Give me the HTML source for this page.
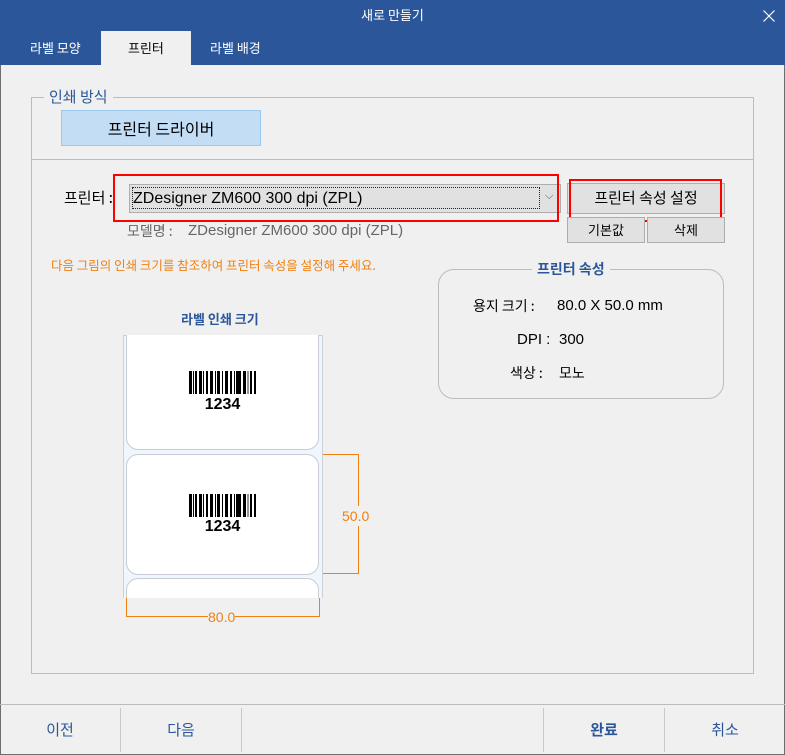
<!DOCTYPE html><html><head><meta charset="utf-8"><style>
*{box-sizing:border-box;margin:0;padding:0}
body{width:785px;height:755px;background:#f0f0f0;font-family:"Liberation Sans","Noto Sans CJK KR",sans-serif;position:relative;overflow:hidden;font-size:14px;color:#000}
.a{position:absolute}
.kr{font-family:"Noto Sans CJK KR","Liberation Sans",sans-serif}
.btn{position:absolute;background:#e1e1e1;border:1px solid #adadad;text-align:center}
.lab{position:absolute;left:126px;width:193px;background:#fff;border:1px solid #c8ccd4;border-radius:12px}
.bc{position:absolute;left:62px;top:36px}
.num{position:absolute;left:0;width:100%;text-align:center;font-weight:bold;font-size:16px;top:60px}
</style></head><body>
<div class="a" style="left:0;top:0;width:785px;height:755px;border:1px solid #6e6e6e"></div>
<div class="a" style="left:0;top:0;width:785px;height:65px;background:#2b579a"></div>
<div class="a kr" style="left:0;top:5px;width:785px;text-align:center;color:#fff;font-size:13px">새로 만들기</div>
<svg class="a" style="left:763px;top:10px" width="12" height="12" viewBox="0 0 12 12"><path d="M0.5 0.5L11.5 11.5M11.5 0.5L0.5 11.5" stroke="#fff" stroke-width="1.2"/></svg>
<div class="a kr" style="left:30px;top:38px;color:#fff;font-size:13px">라벨 모양</div>
<div class="a" style="left:101px;top:31px;width:90px;height:34px;background:#f0f0f0"></div>
<div class="a kr" style="left:128px;top:38px;font-size:13px">프린터</div>
<div class="a kr" style="left:210px;top:38px;color:#fff;font-size:13px">라벨 배경</div>

<div class="a" style="left:31px;top:97px;width:723px;height:577px;border:1px solid #bcbcbc"></div>
<div class="a" style="left:31px;top:159px;width:723px;height:1px;background:#bcbcbc"></div>
<div class="a kr" style="left:44px;top:86px;padding:0 5px;background:#f0f0f0;color:#2b579a;font-size:15px">인쇄 방식</div>
<div class="a kr" style="left:61px;top:110px;width:200px;height:36px;background:#c2ddf4;border:1px solid #99c9ef;text-align:center;line-height:34px;font-size:16px">프린터 드라이버</div>

<div class="a kr" style="left:64px;top:187px;font-size:15px">프린터 :</div>
<div class="a" style="left:129px;top:184px;width:432px;height:29px;background:#e1e1e1;border:1px solid #adadad"></div>
<div class="a" style="left:132px;top:187px;width:408px;height:22px;border:1px dotted #222"></div>
<div class="a" style="left:133px;top:190px;font-size:16px">ZDesigner ZM600 300 dpi (ZPL)</div>
<div class="a" style="left:545px;top:190px;font-size:11px;color:#555">⌵</div>
<div class="a" style="left:113px;top:174px;width:446px;height:48px;border:2px solid #f00"></div>
<div class="a kr" style="left:127px;top:221px;color:#666;font-size:14px">모델명 :</div>
<div class="a" style="left:188px;top:222px;color:#666;font-size:15px">ZDesigner ZM600 300 dpi (ZPL)</div>

<div class="btn kr" style="left:567px;top:183px;width:158px;height:31px;line-height:28px;font-size:15px">프린터 속성 설정</div>
<div class="a" style="left:569px;top:179px;width:153px;height:43px;border:2px solid #f00"></div>
<div class="btn kr" style="left:567px;top:217px;width:78px;height:26px;line-height:23px;font-size:13px">기본값</div>
<div class="btn kr" style="left:647px;top:217px;width:78px;height:26px;line-height:23px;font-size:13px">삭제</div>

<div class="a kr" style="left:51px;top:255px;color:#f08010;font-size:12.5px">다음 그림의 인쇄 크기를 참조하여 프린터 속성을 설정해 주세요.</div>

<div class="a" style="left:438px;top:269px;width:286px;height:130px;border:1px solid #bcbcbc;border-radius:16px"></div>
<div class="a kr" style="left:532px;top:259px;padding:0 5px;background:#f0f0f0;color:#2b579a;font-size:14px;font-weight:bold">프린터 속성</div>
<div class="a kr" style="left:473px;top:296px;font-size:14px">용지 크기 :</div>
<div class="a" style="left:557px;top:297px;font-size:15px">80.0 X 50.0 mm</div>
<div class="a" style="left:517px;top:331px;font-size:15px">DPI :</div>
<div class="a" style="left:559px;top:331px;font-size:15px">300</div>
<div class="a kr" style="left:510px;top:363px;font-size:14px">색상 :</div>
<div class="a kr" style="left:559px;top:363px;font-size:14px">모노</div>

<div class="a kr" style="left:181px;top:309px;color:#2b579a;font-size:13px;font-weight:bold">라벨 인쇄 크기</div>
<div class="a" style="left:123px;top:335px;width:200px;height:263px;background:#f0f6fd;border:1px solid #ccd0d8;border-bottom:none"></div>
<div class="lab" style="top:335px;height:115px;border-top:none;border-radius:0 0 12px 12px"><svg class="bc" width="69" height="23" viewBox="0 0 69 23"><g fill="#000"><rect x="0" width="3" height="23"/><rect x="4" width="1" height="23"/><rect x="6" width="2" height="23"/><rect x="10" width="3" height="23"/><rect x="14" width="1" height="23"/><rect x="17" width="2" height="23"/><rect x="21" width="3" height="23"/><rect x="26" width="1" height="23"/><rect x="28" width="3" height="23"/><rect x="33" width="1" height="23"/><rect x="36" width="3" height="23"/><rect x="41" width="2" height="23"/><rect x="45" width="1" height="23"/><rect x="47" width="5" height="23"/><rect x="54" width="3" height="23"/><rect x="61" width="2" height="23"/><rect x="58" width="2" height="23" fill="#999"/><rect x="65" width="2" height="23"/></g></svg><div class="num" style="top:61px">1234</div></div>
<div class="lab" style="top:454px;height:121px"><svg class="bc" width="69" height="23" viewBox="0 0 69 23" style="top:39px"><g fill="#000"><rect x="0" width="3" height="23"/><rect x="4" width="1" height="23"/><rect x="6" width="2" height="23"/><rect x="10" width="3" height="23"/><rect x="14" width="1" height="23"/><rect x="17" width="2" height="23"/><rect x="21" width="3" height="23"/><rect x="26" width="1" height="23"/><rect x="28" width="3" height="23"/><rect x="33" width="1" height="23"/><rect x="36" width="3" height="23"/><rect x="41" width="2" height="23"/><rect x="45" width="1" height="23"/><rect x="47" width="5" height="23"/><rect x="54" width="3" height="23"/><rect x="61" width="2" height="23"/><rect x="58" width="2" height="23" fill="#999"/><rect x="65" width="2" height="23"/></g></svg><div class="num" style="top:63px">1234</div></div>
<div class="lab" style="top:578px;height:30px;border-bottom:none;border-radius:12px 12px 0 0"></div>
<div class="a" style="left:110px;top:598px;width:230px;height:12px;background:#f0f0f0"></div>
<div class="a" style="left:323px;top:454px;width:36px;height:120px;border:1px solid #f08010;border-left:none"></div>
<div class="a" style="left:342px;top:506px;padding:2px 0;background:#f0f0f0;color:#f08010;font-size:14px">50.0</div>
<div class="a" style="left:126px;top:598px;width:194px;height:19px;border:1px solid #f08010;border-top:none"></div>
<div class="a" style="left:208px;top:609px;background:#f0f0f0;color:#f08010;font-size:14px;line-height:16px">80.0</div>

<div class="a" style="left:0;top:704px;width:785px;height:1px;background:#bcbcbc"></div>
<div class="a" style="left:120px;top:708px;width:1px;height:44px;background:#c8c8c8"></div>
<div class="a" style="left:241px;top:708px;width:1px;height:44px;background:#c8c8c8"></div>
<div class="a" style="left:543px;top:708px;width:1px;height:44px;background:#c8c8c8"></div>
<div class="a" style="left:664px;top:708px;width:1px;height:44px;background:#c8c8c8"></div>
<div class="a kr" style="left:0;top:719px;width:120px;text-align:center;color:#2b579a;font-size:15px">이전</div>
<div class="a kr" style="left:121px;top:719px;width:120px;text-align:center;color:#2b579a;font-size:15px">다음</div>
<div class="a kr" style="left:544px;top:719px;width:120px;text-align:center;color:#2b579a;font-size:15px;font-weight:bold">완료</div>
<div class="a kr" style="left:665px;top:719px;width:120px;text-align:center;color:#2b579a;font-size:15px">취소</div>
</body></html>
